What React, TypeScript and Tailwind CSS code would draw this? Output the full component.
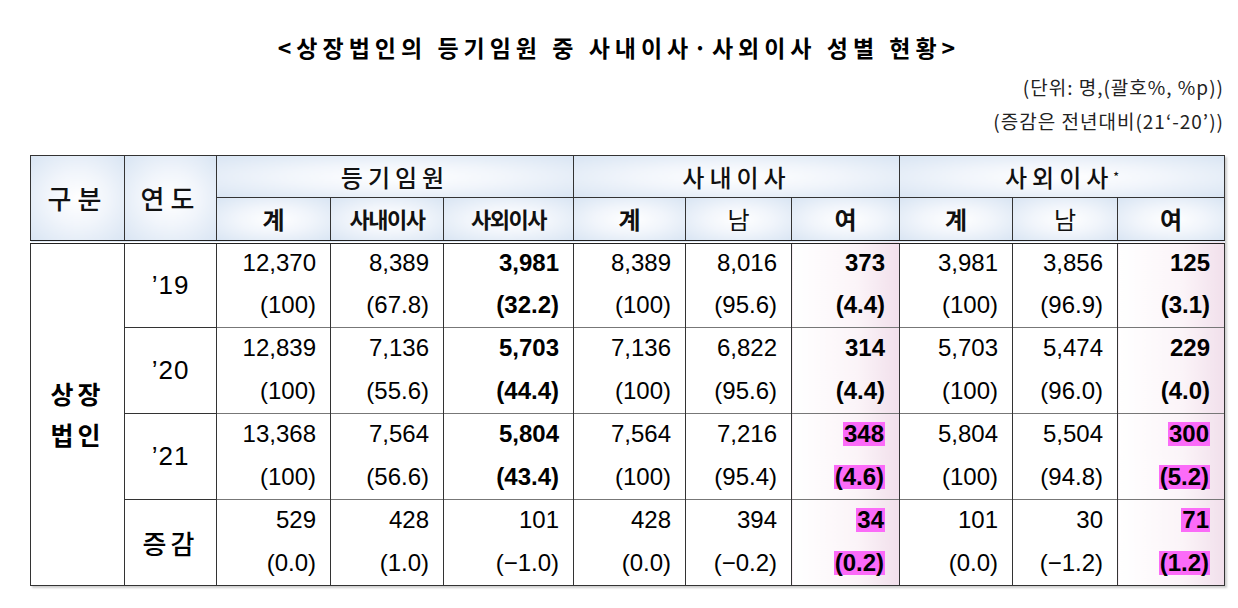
import React from "react";

type Cell = { v: string; p: string; bold?: boolean; hl?: boolean; pink?: boolean };

const kr = { fontFamily: '"Noto Sans CJK KR", "Noto Sans", sans-serif' };
const num = { fontFamily: '"Liberation Sans", Arial, sans-serif' };

const headBg = "bg-[radial-gradient(ellipse_at_center,#ffffff_0%,#f1f5fb_45%,#d9e5f3_100%)]";
const pinkBg = "bg-[linear-gradient(to_right,#ffffff_0%,#fbf4f8_60%,#f1dfeb_100%)]";

const rows: { year: string; cells: Cell[] }[] = [
  {
    year: "’19",
    cells: [
      { v: "12,370", p: "(100)" },
      { v: "8,389", p: "(67.8)" },
      { v: "3,981", p: "(32.2)", bold: true },
      { v: "8,389", p: "(100)" },
      { v: "8,016", p: "(95.6)" },
      { v: "373", p: "(4.4)", bold: true, pink: true },
      { v: "3,981", p: "(100)" },
      { v: "3,856", p: "(96.9)" },
      { v: "125", p: "(3.1)", bold: true, pink: true },
    ],
  },
  {
    year: "’20",
    cells: [
      { v: "12,839", p: "(100)" },
      { v: "7,136", p: "(55.6)" },
      { v: "5,703", p: "(44.4)", bold: true },
      { v: "7,136", p: "(100)" },
      { v: "6,822", p: "(95.6)" },
      { v: "314", p: "(4.4)", bold: true, pink: true },
      { v: "5,703", p: "(100)" },
      { v: "5,474", p: "(96.0)" },
      { v: "229", p: "(4.0)", bold: true, pink: true },
    ],
  },
  {
    year: "’21",
    cells: [
      { v: "13,368", p: "(100)" },
      { v: "7,564", p: "(56.6)" },
      { v: "5,804", p: "(43.4)", bold: true },
      { v: "7,564", p: "(100)" },
      { v: "7,216", p: "(95.4)" },
      { v: "348", p: "(4.6)", bold: true, pink: true, hl: true },
      { v: "5,804", p: "(100)" },
      { v: "5,504", p: "(94.8)" },
      { v: "300", p: "(5.2)", bold: true, pink: true, hl: true },
    ],
  },
  {
    year: "증감",
    cells: [
      { v: "529", p: "(0.0)" },
      { v: "428", p: "(1.0)" },
      { v: "101", p: "(−1.0)" },
      { v: "428", p: "(0.0)" },
      { v: "394", p: "(−0.2)" },
      { v: "34", p: "(0.2)", pink: true, hl: true },
      { v: "101", p: "(0.0)" },
      { v: "30", p: "(−1.2)" },
      { v: "71", p: "(1.2)", pink: true, hl: true },
    ],
  },
];

const subHeads = ["계", "사내이사", "사외이사", "계", "남", "여", "계", "남", "여"];

function Val({ text, bold, hl }: { text: string; bold?: boolean; hl?: boolean }) {
  return (
    <span
      style={num}
      className={`inline-block text-[24px] leading-[24px] ${bold || hl ? "font-bold" : "font-normal"} ${
        hl ? "bg-[#fb6bf8] px-[1px]" : ""
      }`}
    >
      {text}
    </span>
  );
}

export default function App() {
  const th = `border border-[#333] text-[#111] text-center ${headBg}`;
  return (
    <div className="w-[1238px] h-[608px] bg-white flex flex-col text-black">
      <h1 style={kr} className="mt-[33px] text-center text-[23px] leading-[28px] font-bold tracking-[5px]">
        &lt;상장법인의 등기임원 중 사내이사·사외이사 성별 현황&gt;
      </h1>
      <div style={kr} className="mt-[14px] pr-[14px] text-right text-[19px] leading-[24px] tracking-[1px] text-[#222]">
        (단위: 명,(괄호%, %p))
      </div>
      <div style={kr} className="mt-[10px] pr-[14px] text-right text-[19px] leading-[24px] tracking-[1px] text-[#222]">
        (증감은 전년대비(21‘-20’))
      </div>
      <div className="mt-[22px] ml-[30px]">
        <table className="table-fixed border-collapse w-[1194px] shadow-[2px_2px_2px_rgba(0,0,0,0.2)]">
          <colgroup>
            <col className="w-[94px]" />
            <col className="w-[92px]" />
            <col className="w-[114px]" />
            <col className="w-[113px]" />
            <col className="w-[130px]" />
            <col className="w-[112px]" />
            <col className="w-[106px]" />
            <col className="w-[108px]" />
            <col className="w-[113px]" />
            <col className="w-[105px]" />
            <col className="w-[107px]" />
          </colgroup>
          <thead style={kr}>
            <tr className="h-[42px]">
              <th rowSpan={2} className={`${th} font-medium border-b-4 border-b-[#222] border-double text-[26px] tracking-[6px]`}>
                구분
              </th>
              <th rowSpan={2} className={`${th} font-medium border-b-4 border-b-[#222] border-double text-[26px] tracking-[6px]`}>
                연도
              </th>
              <th colSpan={3} className={`${th} font-medium text-[24px] tracking-[5px]`}>
                등기임원
              </th>
              <th colSpan={3} className={`${th} font-medium text-[24px] tracking-[5px]`}>
                사내이사
              </th>
              <th colSpan={3} className={`${th} font-medium text-[24px] tracking-[5px]`}>
                사외이사<sup className="text-[12px] tracking-normal">*</sup>
              </th>
            </tr>
            <tr className="h-[44px]">
              {subHeads.map((t, i) => (
                <th
                  key={i}
                  className={`${th} border-b-4 border-b-[#222] border-double ${
                    t.length > 1
                      ? "text-[22px] tracking-[-1.5px] font-bold"
                      : t === "남"
                        ? "text-[24px] font-normal"
                        : "text-[24px] font-bold"
                  }`}
                >
                  {t}
                </th>
              ))}
            </tr>
          </thead>
          <tbody>
            {rows.map((r, ri) => (
              <React.Fragment key={ri}>
                <tr className="h-[43px]">
                  {ri === 0 && (
                    <td
                      rowSpan={8}
                      style={kr}
                      className="border border-[#333] text-center align-middle text-[25px] leading-[41px] font-bold tracking-[4px]"
                    >
                      상장
                      <br />
                      법인
                    </td>
                  )}
                  <td
                    rowSpan={2}
                    style={r.year === "증감" ? kr : num}
                    className={`border border-[#333] text-center align-middle text-[26px] ${
                      ri > 0 ? "border-t-[#777] border-t-dotted" : ""
                    } ${r.year === "증감" ? "tracking-[4px] font-medium" : "tracking-[1px]"}`}
                  >
                    {r.year}
                  </td>
                  {r.cells.map((c, ci) => (
                    <td
                      key={ci}
                      className={`border-x border-[#333] text-right pr-[14px] align-middle ${
                        ri > 0 ? "border-t border-t-[#777] border-t-dotted" : ""
                      } ${c.pink ? pinkBg : ""}`}
                    >
                      <Val text={c.v} bold={c.bold} hl={c.hl} />
                    </td>
                  ))}
                </tr>
                <tr className="h-[43px]">
                  {r.cells.map((c, ci) => (
                    <td
                      key={ci}
                      className={`border-x border-[#333] text-right pr-[14px] align-middle ${
                        ri === 3 ? "border-b border-b-[#333]" : ""
                      } ${c.pink ? pinkBg : ""}`}
                    >
                      <Val text={c.p} bold={c.bold} hl={c.hl} />
                    </td>
                  ))}
                </tr>
              </React.Fragment>
            ))}
          </tbody>
        </table>
      </div>
    </div>
  );
}
